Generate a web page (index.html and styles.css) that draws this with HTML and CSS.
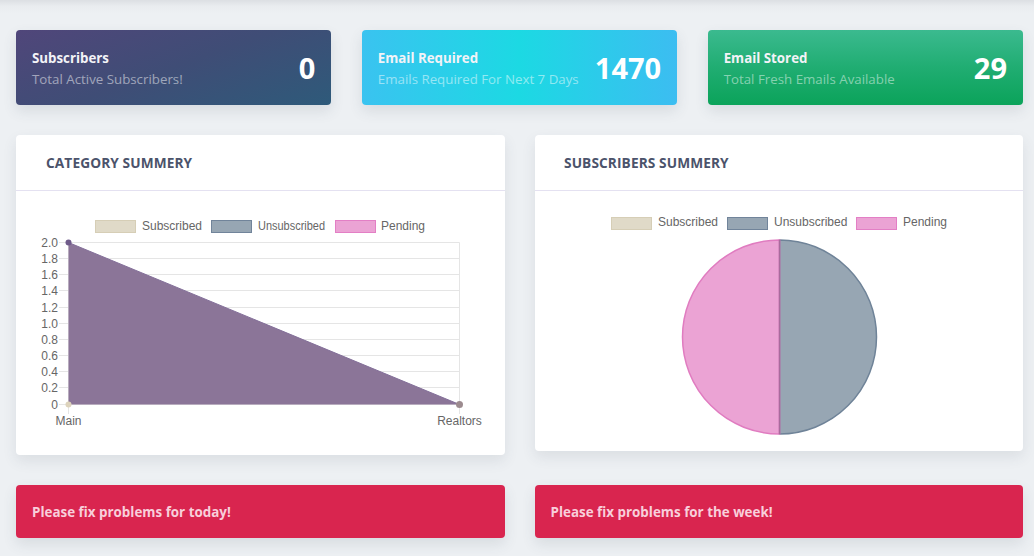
FILE: index.html
```html
<!DOCTYPE html>
<html lang="en">
<head>
<meta charset="utf-8">
<title>Dashboard</title>
<link rel="stylesheet" href="styles.css">
</head>
<body>
<div class="page">
  <section class="stats">
    <div class="stat stat-purple">
      <div class="stat-text">
        <div class="stat-title">Subscribers</div>
        <div class="stat-sub">Total Active Subscribers!</div>
      </div>
      <div class="stat-num">0</div>
    </div>
    <div class="stat stat-cyan">
      <div class="stat-text">
        <div class="stat-title">Email Required</div>
        <div class="stat-sub">Emails Required For Next 7 Days</div>
      </div>
      <div class="stat-num">1470</div>
    </div>
    <div class="stat stat-green">
      <div class="stat-text">
        <div class="stat-title">Email Stored</div>
        <div class="stat-sub">Total Fresh Emails Available</div>
      </div>
      <div class="stat-num">29</div>
    </div>
  </section>

  <section class="charts">
    <div class="panel panel-left">
      <div class="panel-head">CATEGORY SUMMERY</div>
      <div class="panel-body">
        <svg class="chart" width="489" height="264" viewBox="0 0 489 264">
          <g class="legend">
            <rect x="79.5" y="29.5" width="40" height="12" fill="#e0dac8" stroke="#d6ceb6"/>
            <text x="126" y="39">Subscribed</text>
            <rect x="195.5" y="29.5" width="40" height="12" fill="#97a6b3" stroke="#71849a"/>
            <text x="242" y="39" textLength="67" lengthAdjust="spacingAndGlyphs">Unsubscribed</text>
            <rect x="319.5" y="29.5" width="40" height="12" fill="#eba3d4" stroke="#e37fc5"/>
            <text x="365" y="39">Pending</text>
          </g>
          <g class="grid" stroke="#e5e5e5" stroke-width="1">
            <line x1="43" y1="51.5" x2="443.5" y2="51.5"/>
            <line x1="43" y1="67.5" x2="443.5" y2="67.5"/>
            <line x1="43" y1="83.5" x2="443.5" y2="83.5"/>
            <line x1="43" y1="99.5" x2="443.5" y2="99.5"/>
            <line x1="43" y1="116.5" x2="443.5" y2="116.5"/>
            <line x1="43" y1="132.5" x2="443.5" y2="132.5"/>
            <line x1="43" y1="148.5" x2="443.5" y2="148.5"/>
            <line x1="43" y1="164.5" x2="443.5" y2="164.5"/>
            <line x1="43" y1="180.5" x2="443.5" y2="180.5"/>
            <line x1="43" y1="196.5" x2="443.5" y2="196.5"/>
            <line x1="43" y1="213.5" x2="443.5" y2="213.5"/>
            <line x1="52.5" y1="51.5" x2="52.5" y2="223"/>
            <line x1="443.5" y1="51.5" x2="443.5" y2="223"/>
          </g>
          <polygon points="52.5,51.5 443.5,213.5 52.5,213.5" fill="#8b7598"/>
          <line x1="52.5" y1="51.5" x2="443.5" y2="213.5" stroke="#84709a" stroke-width="1"/>
          <circle cx="52.5" cy="51.5" r="3" fill="#6f5b8a"/>
          <circle cx="52.5" cy="213.5" r="3" fill="#ddd3bc"/>
          <circle cx="443.5" cy="213.5" r="3.5" fill="#9c8b8f"/>
          <g class="ticks">
            <text x="42" y="55.5">2.0</text>
            <text x="42" y="71.5">1.8</text>
            <text x="42" y="87.5">1.6</text>
            <text x="42" y="103.5">1.4</text>
            <text x="42" y="120.5">1.2</text>
            <text x="42" y="136.5">1.0</text>
            <text x="42" y="152.5">0.8</text>
            <text x="42" y="168.5">0.6</text>
            <text x="42" y="184.5">0.4</text>
            <text x="42" y="200.5">0.2</text>
            <text x="42" y="217.5">0</text>
          </g>
          <g class="xlabels">
            <text x="52.5" y="234">Main</text>
            <text x="443.5" y="234">Realtors</text>
          </g>
        </svg>
      </div>
    </div>
    <div class="panel panel-right">
      <div class="panel-head">SUBSCRIBERS SUMMERY</div>
      <div class="panel-body">
        <svg class="chart" width="488" height="260" viewBox="0 0 488 260">
          <g class="legend">
            <rect x="76.5" y="26.5" width="40" height="12" fill="#e0dac8" stroke="#d6ceb6"/>
            <text x="123" y="35">Subscribed</text>
            <rect x="192.5" y="26.5" width="40" height="12" fill="#97a6b3" stroke="#71849a"/>
            <text x="239" y="35">Unsubscribed</text>
            <rect x="321.5" y="26.5" width="40" height="12" fill="#eba3d4" stroke="#e37fc5"/>
            <text x="368" y="35">Pending</text>
          </g>
          <path d="M244.5,146 L244.5,49 A97,97 0 0 1 244.5,243 Z" fill="#97a6b3" stroke="#6f8398" stroke-width="1.5"/>
          <path d="M244.5,146 L244.5,243 A97,97 0 0 1 244.5,49 Z" fill="#eba3d4" stroke="#e07cc0" stroke-width="1.5"/>
          <line x1="244.5" y1="49" x2="244.5" y2="243" stroke="#a86b9c" stroke-width="1.5"/>
        </svg>
      </div>
    </div>
  </section>

  <section class="alerts">
    <div class="alert">Please fix problems for today!</div>
    <div class="alert">Please fix problems for the week!</div>
  </section>
</div>
</body>
</html>
```
FILE: styles.css
```css
* { box-sizing: border-box; }
html, body { margin: 0; padding: 0; }
body {
  background: linear-gradient(to bottom, #dcdfe3 0px, #e9ecef 6px, #edf0f3 14px, #edf0f3 100%);
  font-family: "Open Sans", "Noto Sans", sans-serif;
  height: 556px;
  overflow: hidden;
}
.page {
  padding: 30px 11px 0 16px;
}
.stats {
  display: grid;
  grid-template-columns: repeat(3, 1fr);
  column-gap: 30.5px;
}
.stat {
  height: 75px;
  border-radius: 4px;
  display: flex;
  align-items: center;
  justify-content: space-between;
  padding: 2px 16px 0 16px;
  box-shadow: 0 6px 14px rgba(60, 70, 90, 0.12);
  color: #fff;
}
.stat-purple { background: linear-gradient(160deg, #50467a 0%, #3f4d76 50%, #2e5a7a 100%); }
.stat-cyan { background: linear-gradient(90deg, #3ac3f0 0%, #1cd9e3 50%, #3cbdf1 100%); }
.stat-green { background: linear-gradient(180deg, #3bba8f 0%, #20ad72 50%, #0ba35a 100%); }
.stat-title {
  font-size: 13.3px;
  font-weight: 700;
  line-height: 18px;
  color: #f3f3f7;
}
.stat-sub {
  font-size: 13.3px;
  line-height: 18px;
  margin-top: 3px;
  color: rgba(255, 255, 255, 0.5);
}
.stat-green .stat-sub { color: rgba(255, 255, 255, 0.48); }
.stat-num {
  font-size: 29px;
  font-weight: 700;
  line-height: 36px;
  color: #fff;
  margin-top: -2px;
}
.charts {
  display: grid;
  grid-template-columns: 1fr 1fr;
  column-gap: 30px;
  align-items: start;
  margin-top: 30px;
}
.panel {
  background: #fff;
  border-radius: 4px;
  box-shadow: 0 6px 14px rgba(60, 70, 90, 0.1);
}
.panel-left { height: 320px; }
.panel-right { height: 316px; }
.panel-head {
  height: 56px;
  padding: 0 30px;
  display: flex;
  align-items: center;
  border-bottom: 1px solid #e4e1f1;
  font-size: 13.7px;
  font-weight: 700;
  color: #4b536b;
  letter-spacing: 0.1px;
}
.panel-right .panel-head { padding-left: 29px; }
.panel-body { overflow: hidden; }
.chart { display: block; }
.chart text {
  font-family: "Liberation Sans", Arial, sans-serif;
  font-size: 12px;
  fill: #666;
}
.ticks text { text-anchor: end; }
.xlabels text { text-anchor: middle; }
.alerts {
  display: grid;
  grid-template-columns: 1fr 1fr;
  column-gap: 30px;
  margin-top: 30px;
}
.alert {
  height: 53px;
  background: #d9254f;
  border-radius: 4px;
  display: flex;
  align-items: center;
  padding: 0 16px;
  font-size: 13.4px;
  font-weight: 700;
  color: #f8cfdb;
  box-shadow: 0 6px 14px rgba(60, 70, 90, 0.12);
}
```
